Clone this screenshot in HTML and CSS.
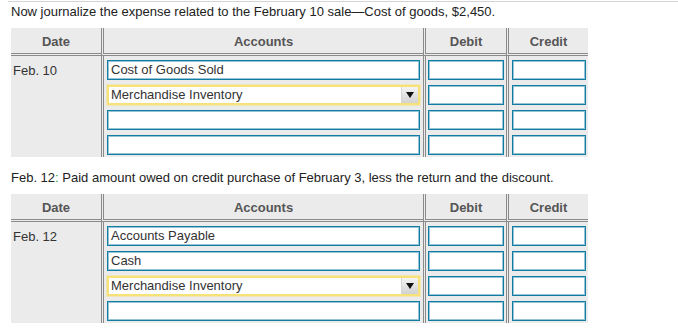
FILE: index.html
```html
<!DOCTYPE html>
<html>
<head>
<meta charset="utf-8">
<link rel="stylesheet" href="styles.css">
</head>
<body>
<div class="page">
  <p class="prompt">Now journalize the expense related to the February 10 sale—Cost of goods, $2,450.</p>
  <div class="journal">
    <div class="head c-date">Date</div>
    <div class="head c-acct">Accounts</div>
    <div class="head c-debit">Debit</div>
    <div class="head c-credit">Credit</div>
    <div class="cell c-date date-text">Feb. 10</div>
    <div class="cell c-acct">
      <div class="field">Cost of Goods Sold</div>
      <div class="field select">Merchandise Inventory<span class="arrow"><svg width="8" height="6" viewBox="0 0 8 6"><path d="M0 0h8L4 6z" fill="#111"/></svg></span></div>
      <div class="field"></div>
      <div class="field"></div>
    </div>
    <div class="cell c-debit">
      <div class="field"></div>
      <div class="field"></div>
      <div class="field"></div>
      <div class="field"></div>
    </div>
    <div class="cell c-credit">
      <div class="field"></div>
      <div class="field"></div>
      <div class="field"></div>
      <div class="field"></div>
    </div>
  </div>

  <p class="prompt second">Feb. 12<span class="colon">:</span> Paid amount owed on credit purchase of February 3, less the return and the discount.</p>
  <div class="journal">
    <div class="head c-date">Date</div>
    <div class="head c-acct">Accounts</div>
    <div class="head c-debit">Debit</div>
    <div class="head c-credit">Credit</div>
    <div class="cell c-date date-text">Feb. 12</div>
    <div class="cell c-acct">
      <div class="field">Accounts Payable</div>
      <div class="field">Cash</div>
      <div class="field select">Merchandise Inventory<span class="arrow"><svg width="8" height="6" viewBox="0 0 8 6"><path d="M0 0h8L4 6z" fill="#111"/></svg></span></div>
      <div class="field"></div>
    </div>
    <div class="cell c-debit">
      <div class="field"></div>
      <div class="field"></div>
      <div class="field"></div>
      <div class="field"></div>
    </div>
    <div class="cell c-credit">
      <div class="field"></div>
      <div class="field"></div>
      <div class="field"></div>
      <div class="field"></div>
    </div>
  </div>
</div>
</body>
</html>
```

FILE: styles.css
```css
html, body {
  margin: 0;
  padding: 0;
  background: #fff;
}

body {
  font-family: "Liberation Sans", Arial, sans-serif;
  font-size: 13px;
  color: #222;
}

.page {
  margin-left: 8px;
  margin-top: 1px;
  border-top: 1px solid #d4d4d8;
  padding-left: 3px;
}

.prompt {
  margin: 0;
  height: 26px;
  line-height: 20px;
  white-space: nowrap;
}

.prompt.second {
  margin-top: 11px;
  height: 26px;
}

.colon {
  color: #2e9a2e;
}

.journal {
  display: grid;
  grid-template-columns: 90px 322px 83px 82px;
  grid-template-rows: 28px 101px;
  width: 577px;
  background: #ebebeb;
}

.journal > div {
  box-sizing: border-box;
}

.head {
  font-size: 13px;
  font-weight: bold;
  color: #555;
  text-align: center;
  line-height: 28px;
  border-bottom: 3px double #8a8a8a;
}

.c-acct, .c-debit, .c-credit {
  border-left: 3px double #8a8a8a;
}

.cell {
  padding: 4px 0 2px 0;
  display: flex;
  flex-direction: column;
  gap: 5px;
}

.cell.c-acct { padding-left: 3px; padding-right: 3px; }
.cell.c-debit { padding-left: 2px; padding-right: 2px; }
.cell.c-credit { padding-left: 3px; padding-right: 2px; }

.date-text {
  font-size: 13px;
  color: #333;
  padding-left: 2px;
  padding-top: 7px;
}

.field {
  position: relative;
  box-sizing: border-box;
  height: 20px;
  flex: none;
  background: #fff;
  border: 1px solid #137ca3;
  box-shadow: inset 0 0 0 1px rgba(19, 124, 163, 0.45);
  font-size: 13px;
  line-height: 18px;
  color: #333;
  padding-left: 3px;
  white-space: nowrap;
}

.field.select {
  border: 2px solid #f7e27a;
  box-shadow: 0 0 0 1px rgba(247, 226, 122, 0.45);
  padding-left: 2px;
  line-height: 16px;
}

.arrow {
  position: absolute;
  right: 0;
  top: 0;
  bottom: 0;
  width: 16px;
  background: linear-gradient(#f4f4f4, #d2d2d2);
  border-left: 1px solid #d6d6d6;
  display: flex;
  align-items: center;
  justify-content: center;
}
```
